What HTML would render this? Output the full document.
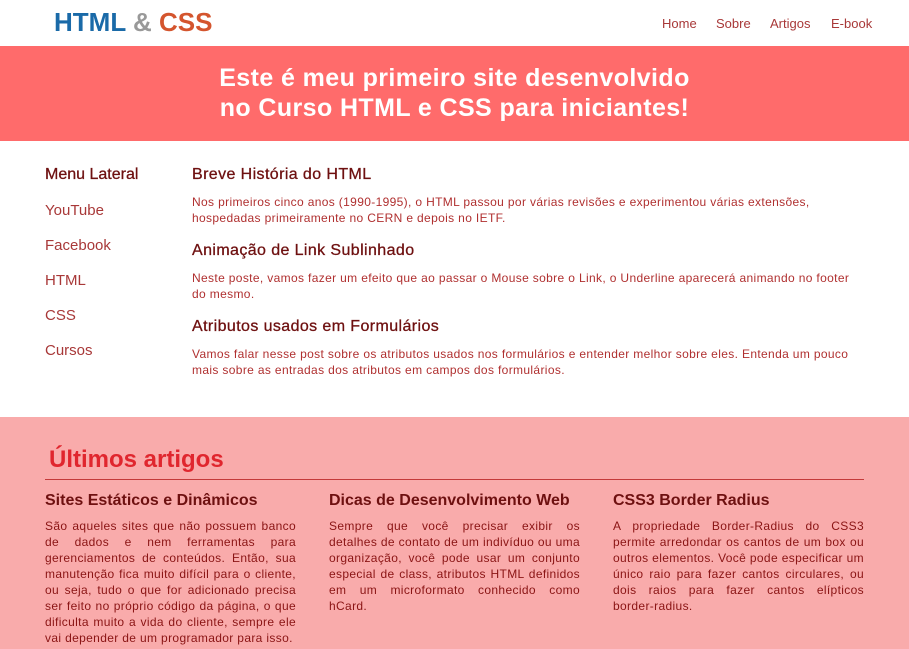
<!DOCTYPE html>
<html><head><meta charset="utf-8"><style>
*{margin:0;padding:0;box-sizing:border-box}
body{width:909px;height:649px;overflow:hidden;font-family:"Liberation Sans",Arial,sans-serif;background:#fff;position:relative}
.a{position:absolute;white-space:nowrap}
.logo{left:54px;top:7px;font-size:26px;font-weight:bold;color:#1a6aa8}
.nav{top:16px;font-size:13px;color:#a83838}
.hero{left:0;top:46px;width:909px;height:95px;background:#ff6b6b;color:#fff;font-size:25px;letter-spacing:.4px;font-weight:bold;text-align:center;line-height:30px;padding-top:17px}
.h{font-size:16px;color:#6e1010;letter-spacing:.4px}
.m{font-size:15px;color:#a83838;left:45px}
.p{font-size:12px;color:#b03030;line-height:16px;white-space:normal;width:670px;letter-spacing:.35px}
.foot{left:0;top:417px;width:909px;height:232px;background:#f9abab;white-space:normal}
.col{position:absolute;width:251px;font-size:12px;line-height:16px;color:#8a1414;text-align:justify;white-space:normal;letter-spacing:.35px}
.col h3{font-size:16px;color:#6e1010;margin-bottom:9px;white-space:nowrap;letter-spacing:0}
</style></head><body>
<div class="a logo">HTML <span style="color:#999">&amp;</span> <span style="color:#d4552e">CSS</span></div>
<div class="a nav" style="left:662px">Home</div>
<div class="a nav" style="left:716px">Sobre</div>
<div class="a nav" style="left:770px">Artigos</div>
<div class="a nav" style="left:831px">E-book</div>
<div class="a hero">Este é meu primeiro site desenvolvido<br>no Curso HTML e CSS para iniciantes!</div>
<div class="a h" style="left:45px;top:166px;-webkit-text-stroke:.3px #6e1010;letter-spacing:0">Menu Lateral</div>
<div class="a m" style="top:202px">YouTube</div>
<div class="a m" style="top:237px">Facebook</div>
<div class="a m" style="top:272px">HTML</div>
<div class="a m" style="top:307px">CSS</div>
<div class="a m" style="top:342px">Cursos</div>
<div class="a h" style="left:192px;top:166px;-webkit-text-stroke:.3px #6e1010">Breve História do HTML</div>
<div class="a p" style="left:192px;top:194px">Nos primeiros cinco anos (1990-1995), o HTML passou por várias revisões e experimentou várias extensões, hospedadas primeiramente no CERN e depois no IETF.</div>
<div class="a h" style="left:192px;top:242px;-webkit-text-stroke:.3px #6e1010">Animação de Link Sublinhado</div>
<div class="a p" style="left:192px;top:270px">Neste poste, vamos fazer um efeito que ao passar o Mouse sobre o Link, o Underline aparecerá animando no footer do mesmo.</div>
<div class="a h" style="left:192px;top:318px;-webkit-text-stroke:.3px #6e1010">Atributos usados em Formulários</div>
<div class="a p" style="left:192px;top:346px">Vamos falar nesse post sobre os atributos usados nos formulários e entender melhor sobre eles. Entenda um pouco mais sobre as entradas dos atributos em campos dos formulários.</div>
<div class="a foot">
<div style="position:absolute;left:49px;top:29px;font-size:24px;font-weight:bold;color:#e0262e">Últimos artigos</div>
<div style="position:absolute;left:45px;top:62px;width:819px;height:1px;background:#c43a3a"></div>
<div class="col" style="left:45px;top:76px"><h3>Sites Estáticos e Dinâmicos</h3>São aqueles sites que não possuem banco de dados e nem ferramentas para gerenciamentos de conteúdos. Então, sua manutenção fica muito difícil para o cliente, ou seja, tudo o que for adicionado precisa ser feito no próprio código da página, o que dificulta muito a vida do cliente, sempre ele vai depender de um programador para isso.</div>
<div class="col" style="left:329px;top:76px"><h3>Dicas de Desenvolvimento Web</h3>Sempre que você precisar exibir os detalhes de contato de um indivíduo ou uma organização, você pode usar um conjunto especial de class, atributos HTML definidos em um microformato conhecido como hCard.</div>
<div class="col" style="left:613px;top:76px"><h3>CSS3 Border Radius</h3>A propriedade Border-Radius do CSS3 permite arredondar os cantos de um box ou outros elementos. Você pode especificar um único raio para fazer cantos circulares, ou dois raios para fazer cantos elípticos border-radius.</div>
</div>
</body></html>
